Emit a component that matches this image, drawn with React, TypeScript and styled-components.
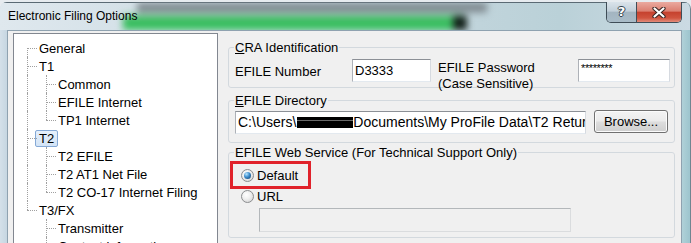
import React from 'react';
import styled, { createGlobalStyle } from 'styled-components';

interface TreeRow {
    label: string;
    level: 0 | 1;
    up: boolean;
    down: boolean;
    rail?: boolean;
    selected?: boolean;
}

const GlobalStyle = createGlobalStyle`
    html, body {
        margin: 0;
        padding: 0;
        overflow: hidden;
        background: #e6ebef;
    }
    body {
        font-family: "Liberation Sans", Arial, sans-serif;
        font-size: 13px;
        color: #000;
    }
`;

const Window = styled.div`
    width: 690px;
    height: 262px;
    margin-top: 2px;
    display: flex;
    flex-direction: column;
    border-right: 1px solid #6f8590;
    border-radius: 7px 7px 0 0;
    overflow: hidden;
    background: linear-gradient(to right, #d4e0e9 0, #c6d6e1 7px, #c0d6de 680px, #b0d1d8 682px, #9fc6cf 689px);
`;

const TitleBar = styled.div`
    height: 28px;
    flex: none;
    box-sizing: border-box;
    display: flex;
    justify-content: space-between;
    align-items: flex-start;
    padding: 0 8px;
    border-top: 1px solid #5a6a74;
    background: linear-gradient(to right, #dfe8ee, #d3e0e7 150px, #c0d4db 480px, #bad1d8 560px, #cbdae3);
`;

/* blurred shapes of the desktop seen through the glass caption */
const GlassBlur = styled.div`
    flex: 1;
    align-self: stretch;
    margin: 0 12px 0 -30px;
    background-image: linear-gradient(#122019, #122019),
        linear-gradient(to bottom, rgba(0, 0, 0, 0) 0, rgba(0, 0, 0, 0) 36%, #3cba5f 56%, #33c25d 100%),
        linear-gradient(to bottom, #737e84, #8d999f);
    background-size: 14px 16px, 340px 100%, 350px 10px;
    background-position: 346px 13px, 16px 0, 30px 0;
    background-repeat: no-repeat;
    filter: blur(3.5px);
`;

const Title = styled.span`
    position: relative;
    z-index: 1;
    margin-top: 6px;
    font-size: 12px;
    line-height: 15px;
    color: #000;
`;

const CaptionButtons = styled.div`
    position: relative;
    z-index: 1;
    margin-top: -1px;
    display: flex;
    border: 1px solid #3f4d57;
    border-top: 0;
    border-radius: 0 0 5px 5px;
    overflow: hidden;
`;

const CaptionButton = styled.div<{ $close?: boolean }>`
    width: ${(p) => (p.$close ? 44 : 29)}px;
    height: 20px;
    display: flex;
    align-items: center;
    justify-content: center;
    border-left: ${(p) => (p.$close ? '1px solid #3f4d57' : '0')};
    background: ${(p) =>
        p.$close
            ? 'linear-gradient(#eaaaa0 0, #dc8072 45%, #c6422f 52%, #d0543f 80%, #e28c7b 100%)'
            : 'linear-gradient(#dae3ea 0, #c2d0da 45%, #a3b5c1 52%, #a9bcc8 100%)'};
`;

const HelpGlyph = styled.span`
    font-family: "DejaVu Sans", sans-serif;
    font-size: 13px;
    font-weight: bold;
    line-height: 14px;
    color: #fff;
    text-shadow: 1px 0 #33414b, -1px 0 #33414b, 0 1px #33414b, 0 -1px #33414b;
`;

const Body = styled.div`
    position: relative;
    z-index: 2;
    flex: 1;
    display: flex;
    padding: 0 8px 0 7px;
`;

const Client = styled.div`
    flex: 1;
    display: flex;
    gap: 10px;
    padding: 2px 6px 0 5px;
    background: #f0f0f0;
    border: 1px solid #8fa2b0;
    border-bottom: 0;
`;

const Tree = styled.div`
    width: 205px;
    flex: none;
    box-sizing: border-box;
    padding-top: 5px;
    background: #fff;
    border: 1px solid #828790;
`;

const Row = styled.div`
    height: 18px;
    display: flex;
    padding-left: 13px;
`;

const Rail = styled.span<{ $on?: boolean }>`
    flex: none;
    width: 19px;
    box-sizing: border-box;
    border-left: 1px dotted ${(p) => (p.$on ? '#a0a0a0' : 'transparent')};
`;

const Elbow = styled.span<{ $up: boolean; $down: boolean }>`
    position: relative;
    flex: none;
    width: 8px;
    &::before {
        content: '';
        position: absolute;
        left: 0;
        top: ${(p) => (p.$up ? '0' : '9px')};
        bottom: ${(p) => (p.$down ? '0' : '9px')};
        border-left: 1px dotted #a0a0a0;
    }
    &::after {
        content: '';
        position: absolute;
        left: 0;
        top: 9px;
        width: 10px;
        border-top: 1px dotted #a0a0a0;
    }
`;

const NodeLabel = styled.span<{ $selected?: boolean }>`
    align-self: center;
    padding: 0 3px;
    line-height: 15px;
    white-space: nowrap;
    border: 1px solid ${(p) => (p.$selected ? '#85a9d6' : 'transparent')};
    border-radius: 2px;
    background: ${(p) => (p.$selected ? 'linear-gradient(#e6f0fb, #d3e4f6)' : 'transparent')};
`;

const Options = styled.div`
    flex: 1;
    display: flex;
    flex-direction: column;
    padding-top: 7px;
`;

const Group = styled.fieldset<{ $mt: number; $pt: number; $pb: number }>`
    margin: ${(p) => p.$mt}px 0 0;
    padding: ${(p) => p.$pt}px 0 ${(p) => p.$pb}px;
    min-width: 0;
    border: 1px solid #d3d9de;
    border-radius: 3px;
`;

const Legend = styled.legend`
    margin-left: 5px;
    padding: 0 1px;
    font-size: 13px;
    line-height: 15px;
`;

const IdGrid = styled.div`
    display: grid;
    grid-template-columns: 117px 79px 147px 92px;
    grid-template-rows: 23px;
    margin-left: 6px;
`;

const FieldLabel = styled.span<{ $top?: boolean }>`
    align-self: ${(p) => (p.$top ? 'start' : 'center')};
    margin-top: ${(p) => (p.$top ? 1 : 2)}px;
    padding-left: ${(p) => (p.$top ? 7 : 0)}px;
    line-height: ${(p) => (p.$top ? 16 : 15)}px;
    white-space: nowrap;
`;

const Field = styled.div<{ $w?: number; $size?: number; $disabled?: boolean }>`
    width: ${(p) => (p.$w ? `${p.$w}px` : 'auto')};
    height: ${(p) => (p.$disabled ? 24 : 23)}px;
    box-sizing: border-box;
    padding: 0 2px;
    border: 1px solid;
    border-color: ${(p) => (p.$disabled ? '#b3b7ba #dadcde #dadcde #b3b7ba' : '#8c9096 #d6dae0 #e3e9ef #adb1b7')};
    background: ${(p) => (p.$disabled ? '#f0f0f0' : '#fff')};
    font-size: ${(p) => p.$size ?? 13}px;
    line-height: 21px;
    white-space: nowrap;
    overflow: hidden;
`;

const Stars = styled.span`
    display: block;
    padding-top: 3px;
    font-size: 11px;
    line-height: 11px;
    letter-spacing: -0.4px;
`;

const Redacted = styled.span`
    display: inline-block;
    width: 56px;
    height: 11px;
    margin-left: 1px;
    vertical-align: -1px;
    background: linear-gradient(#000 0 3px, #6a6a6a 3px 4px, #000 4px);
`;

const DirRow = styled.div`
    display: flex;
    gap: 8px;
    margin-left: 6px;
`;

const Button = styled.button`
    width: 74px;
    height: 23px;
    margin-top: -1px;
    padding: 0;
    border: 1px solid #707070;
    border-radius: 3px;
    background: linear-gradient(#f3f3f3 0, #ebebeb 48%, #dddddd 52%, #cfcfcf 100%);
    box-shadow: inset 0 0 0 1px #fbfbfb;
    font-family: "Liberation Sans", Arial, sans-serif;
    font-size: 13px;
    color: #000;
`;

const Highlight = styled.div`
    width: 81px;
    height: 28px;
    box-sizing: border-box;
    margin-left: 1px;
    padding-left: 8px;
    display: flex;
    align-items: center;
    gap: 3px;
    border: 3px solid #e0222b;
`;

const RadioRow = styled.div`
    height: 14px;
    display: flex;
    align-items: center;
    gap: 3px;
    padding-left: 12px;
`;

const Radio = styled.span<{ $checked?: boolean }>`
    width: 13px;
    height: 13px;
    box-sizing: border-box;
    display: grid;
    place-items: center;
    border: 1px solid #8b8d8f;
    border-radius: 50%;
    background: radial-gradient(circle at 40% 35%, #ffffff 0, #f1f1f1 40%, #cdcdcd 100%);
    &::after {
        content: '';
        width: 7px;
        height: 7px;
        border-radius: 50%;
        background: ${(p) =>
            p.$checked ? 'radial-gradient(circle at 35% 30%, #b8e6ff 0, #3c8ccc 45%, #0d3b66 100%)' : 'transparent'};
    }
`;

const UrlField = styled(Field)`
    margin: 5px 0 0 30px;
`;

const treeRows: TreeRow[] = [
    { label: 'General', level: 0, up: false, down: true },
    { label: 'T1', level: 0, up: true, down: true },
    { label: 'Common', level: 1, rail: true, up: true, down: true },
    { label: 'EFILE Internet', level: 1, rail: true, up: true, down: true },
    { label: 'TP1 Internet', level: 1, rail: true, up: true, down: false },
    { label: 'T2', level: 0, up: true, down: true, selected: true },
    { label: 'T2 EFILE', level: 1, rail: true, up: true, down: true },
    { label: 'T2 AT1 Net File', level: 1, rail: true, up: true, down: true },
    { label: 'T2 CO-17 Internet Filing', level: 1, rail: true, up: true, down: false },
    { label: 'T3/FX', level: 0, up: true, down: false },
    { label: 'Transmitter', level: 1, rail: false, up: true, down: true },
    { label: 'Contact information', level: 1, rail: false, up: true, down: true },
];

const CloseIcon = () => (
    <svg width="16" height="11" viewBox="0 0 16 11">
        <path d="M3.5 1.5 L12.5 9.5 M12.5 1.5 L3.5 9.5" stroke="#3a2522" strokeWidth="4.2" strokeLinecap="round" />
        <path d="M3.5 1.5 L12.5 9.5 M12.5 1.5 L3.5 9.5" stroke="#fff" strokeWidth="2.2" strokeLinecap="round" />
    </svg>
);

const App = () => {
    return (
        <>
            <GlobalStyle />
            <Window>
                <TitleBar>
                    <Title>Electronic Filing Options</Title>
                    <GlassBlur />
                    <CaptionButtons>
                        <CaptionButton>
                            <HelpGlyph>?</HelpGlyph>
                        </CaptionButton>
                        <CaptionButton $close>
                            <CloseIcon />
                        </CaptionButton>
                    </CaptionButtons>
                </TitleBar>
                <Body>
                    <Client>
                        <Tree>
                            {treeRows.map((row) => (
                                <Row key={row.label}>
                                    {row.level === 1 && <Rail $on={row.rail} />}
                                    <Elbow $up={row.up} $down={row.down} />
                                    <NodeLabel $selected={row.selected}>{row.label}</NodeLabel>
                                </Row>
                            ))}
                        </Tree>
                        <Options>
                            <Group $mt={0} $pt={4} $pb={5}>
                                <Legend>
                                    <u>C</u>RA Identification
                                </Legend>
                                <IdGrid>
                                    <FieldLabel>EFILE Number</FieldLabel>
                                    <Field>D3333</Field>
                                    <FieldLabel $top>
                                        EFILE Password
                                        <br />
                                        (Case Sensitive)
                                    </FieldLabel>
                                    <Field>
                                        <Stars>********</Stars>
                                    </Field>
                                </IdGrid>
                            </Group>
                            <Group $mt={5} $pt={3} $pb={8}>
                                <Legend>
                                    <u>E</u>FILE Directory
                                </Legend>
                                <DirRow>
                                    <Field $w={351} $size={14}>
                                        C:\Users\<Redacted />Documents\My ProFile Data\T2 Returns
                                    </Field>
                                    <Button>Browse...</Button>
                                </DirRow>
                            </Group>
                            <Group $mt={2} $pt={1} $pb={5}>
                                <Legend>EFILE Web Service (For Technical Support Only)</Legend>
                                <Highlight>
                                    <Radio $checked />
                                    <span>Default</span>
                                </Highlight>
                                <RadioRow>
                                    <Radio />
                                    <span>URL</span>
                                </RadioRow>
                                <UrlField $w={312} $disabled />
                            </Group>
                        </Options>
                    </Client>
                </Body>
            </Window>
        </>
    );
};

export default App;
